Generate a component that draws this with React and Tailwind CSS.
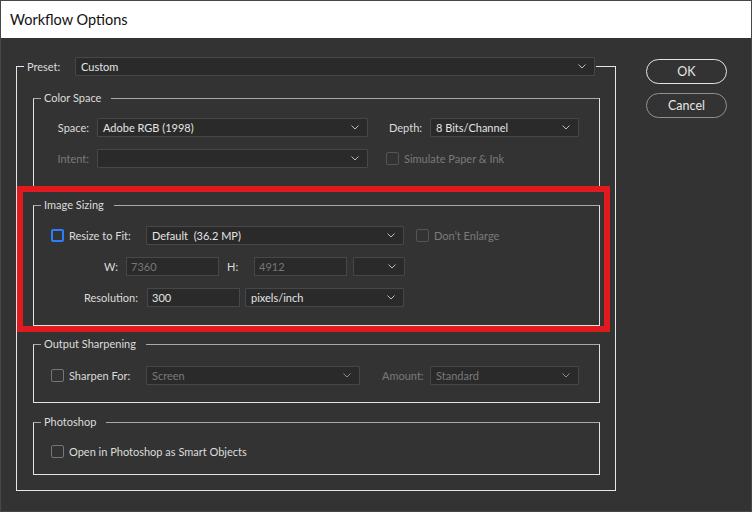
import React from 'react';

const Chevron = ({ dim }) => (
  <svg width="8" height="5" viewBox="0 0 8 5" className="shrink-0">
    <path d="M0.5 0.5 L4 4 L7.5 0.5" fill="none" stroke={dim ? '#8c8c8c' : '#bdbdbd'} strokeWidth="1" />
  </svg>
);

const Select = ({ w, value, disabled }) => (
  <div className={`${w} h-[19px] shrink-0 flex items-center justify-between pl-[5px] pr-[8px] bg-[#2a2a2a] border border-[#474747] rounded-[1px]`}>
    <span className={`whitespace-pre ${disabled ? 'text-[#7a7a7a]' : 'text-[#e4e4e4]'}`}>{value}</span>
    <Chevron dim={disabled} />
  </div>
);

const Field = ({ w, value }) => (
  <div className={`${w} h-[19px] shrink-0 flex items-center pl-[4px] bg-[#2a2a2a] border border-[#474747] text-[#777777]`}>
    {value}
  </div>
);

const Check = ({ tone = 'on' }) => {
  if (tone === 'blue') {
    return <div className="w-[13px] h-[13px] shrink-0 border-2 border-solid border-blue-500 rounded-[2px]" />;
  }
  const border = tone === 'off' ? 'border-[#555555]' : 'border-[#767676]';
  return <div className={`w-[13px] h-[13px] shrink-0 border ${border} rounded-[2px]`} />;
};

const Group = ({ title, h, pt, children }) => (
  <fieldset className={`${h} shrink-0 border border-[#e2e2e2] border-t-[#a9a9a9]`}>
    <legend className="ml-[7px] pl-[3px] pr-[10px] leading-[16px] text-[#dcdcdc]">{title}</legend>
    <div className={`${pt} flex flex-col gap-[12px]`}>{children}</div>
  </fieldset>
);

const App = () => {
  return (
    <div className="w-[752px] h-[512px] flex flex-col border border-[#474747] bg-[#333333] font-['Segoe_UI','Lato',sans-serif] text-[11px] leading-[16px] text-[#dcdcdc] overflow-hidden">
      {/* title bar */}
      <div className="h-[37px] shrink-0 bg-white flex items-center pl-[9px] text-[14.5px] text-[#111111]">
        Workflow Options
      </div>

      <div className="flex items-start pl-[15px] pt-[19px]">
        {/* preset frame */}
        <fieldset className="w-[600px] shrink-0 border border-[#e6e6e6]">
          <legend className="ml-[7px] pl-[3px] pr-[1px]">
            <div className="flex items-center">
              <span className="w-[48px]">Preset:</span>
              <Select w="w-[520px]" value="Custom" />
            </div>
          </legend>

          <div className="flex flex-col pl-[16px] pr-[15px] pt-[14px] pb-[15px]">
            {/* Color Space */}
            <Group title="Color Space" h="h-[97px]" pt="pt-[12px]">
              <div className="flex items-center">
                <span className="w-[55px] text-right">Space:</span>
                <div className="ml-[8px]"><Select w="w-[271px]" value="Adobe RGB (1998)" /></div>
                <span className="ml-[21px] w-[41px]">Depth:</span>
                <Select w="w-[149px]" value="8 Bits/Channel" />
              </div>
              <div className="flex items-center">
                <span className="w-[55px] text-right text-[#7a7a7a]">Intent:</span>
                <div className="ml-[8px]"><Select w="w-[271px]" value="" /></div>
                <div className="ml-[18px]"><Check tone="off" /></div>
                <span className="ml-[5px] text-[#7a7a7a]">Simulate Paper &amp; Ink</span>
              </div>
            </Group>

            {/* Image Sizing, with red highlight box */}
            <div className="-mt-[1px] -ml-[16px] -mr-[10px] -mb-[6px] border-[6px] border-[#e01a1e] pl-[10px] pr-[4px] pt-[5px]">
              <Group title="Image Sizing" h="h-[129px]" pt="pt-[13px]">
                <div className="flex items-center pl-[17px]">
                  <Check tone="blue" />
                  <span className="ml-[5px] w-[77px]">Resize to Fit:</span>
                  <Select w="w-[258px]" value="Default  (36.2 MP)" />
                  <div className="ml-[12px]"><Check tone="off" /></div>
                  <span className="ml-[5px] text-[#7a7a7a]">Don’t Enlarge</span>
                </div>
                <div className="flex items-center">
                  <span className="w-[84px] text-right">W:</span>
                  <div className="ml-[8px]"><Field w="w-[93px]" value="7360" /></div>
                  <span className="ml-[8px] w-[27px]">H:</span>
                  <Field w="w-[93px]" value="4912" />
                  <div className="ml-[6px]"><Select w="w-[52px]" value="" /></div>
                </div>
                <div className="flex items-center">
                  <span className="w-[104px] text-right">Resolution:</span>
                  <div className="ml-[9px] w-[93px] h-[19px] flex items-center pl-[4px] bg-[#2a2a2a] border border-[#474747] text-[#e4e4e4]">
                    300
                  </div>
                  <div className="ml-[5px]"><Select w="w-[159px]" value="pixels/inch" /></div>
                </div>
              </Group>
            </div>

            {/* Output Sharpening */}
            <div className="mt-[10px]">
              <Group title="Output Sharpening" h="h-[67px]" pt="pt-[14px]">
                <div className="flex items-center pl-[17px]">
                  <Check />
                  <span className="ml-[5px] w-[77px]">Sharpen For:</span>
                  <Select w="w-[214px]" value="Screen" disabled />
                  <span className="ml-[22px] w-[48px] text-[#7a7a7a]">Amount:</span>
                  <Select w="w-[149px]" value="Standard" disabled />
                </div>
              </Group>
            </div>

            {/* Photoshop */}
            <div className="mt-[11px]">
              <Group title="Photoshop" h="h-[61px]" pt="pt-[12px]">
                <div className="flex items-center h-[19px] pl-[17px]">
                  <Check />
                  <span className="ml-[5px]">Open in Photoshop as Smart Objects</span>
                </div>
              </Group>
            </div>
          </div>
        </fieldset>

        {/* buttons */}
        <div className="ml-[30px] mt-[2px] flex flex-col gap-[9px]">
          <button className="w-[81px] h-[25px] rounded-full border border-[#e4e4e4] text-[12.5px] text-[#e6e6e6]">
            OK
          </button>
          <button className="w-[81px] h-[25px] rounded-full border border-[#909090] text-[12.5px] text-[#e6e6e6]">
            Cancel
          </button>
        </div>
      </div>
    </div>
  );
};

export default App;
